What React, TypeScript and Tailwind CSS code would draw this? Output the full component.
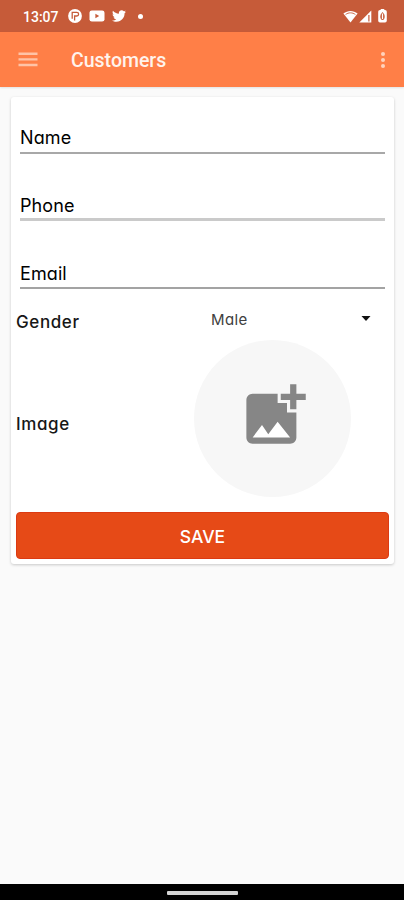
import { FaTwitter } from "react-icons/fa";

//
// ==========================================================
// PAGE
// ==========================================================
export default function App() {
  return (
    <div className="w-full h-[900px] flex flex-col bg-[#fafafa] font-['Roboto',sans-serif] overflow-hidden">
      <StatusBar />
      <AppBar title="Customers" />

      <main className="flex-1 pt-[10px] pl-[11px] pr-[10px]">
        <CustomerForm />
      </main>

      <NavigationBar />
    </div>
  );
}

//
// ==========================================================
// SYSTEM BARS
// ==========================================================
function StatusBar() {
  return (
    <div className="h-8 shrink-0 flex items-center bg-[#c65b39] pl-[23px] pr-[17px] text-white">
      <span className="w-[45px] text-[14px] font-medium leading-none pt-px">
        13:07
      </span>

      {/* P badge */}
      <svg className="w-[14px] h-[14px]" viewBox="0 0 14 14">
        <circle cx="7" cy="7" r="6.9" fill="white" />
        <path
          d="M3.6 3.4h5.2a1.6 1.6 0 0 1 0 3.6H6.6v4.4M4.2 3.4v6.4"
          fill="none"
          stroke="#c65b39"
          strokeWidth="1.3"
        />
      </svg>

      {/* Video */}
      <svg className="ml-[7px] w-4 h-3" viewBox="0 0 16 12">
        <rect x="0.5" y="0.4" width="15" height="11.2" rx="2.4" fill="white" />
        <path d="M6.4 3.8v4.4L10.2 6z" fill="#c65b39" />
      </svg>

      <FaTwitter className="ml-[7px]" size={14} />
      <span className="ml-3 w-[5px] h-[5px] rounded-full bg-white" />

      {/* Wifi, signal, battery */}
      <svg className="ml-auto w-[15px] h-[13px]" viewBox="0 0 15 13">
        <path d="M0.4 3.6C4.6 0 10.4 0 14.6 3.6L7.5 12.4z" fill="white" />
        <path
          d="M2.6 4.5C5.5 2.3 9.5 2.3 12.4 4.5"
          fill="none"
          stroke="#c65b39"
          strokeWidth="0.9"
        />
      </svg>
      <svg className="ml-px w-[13px] h-[13px]" viewBox="0 0 13 13">
        <path d="M12.3 0.5v12H0.3z" fill="white" />
        <path d="M9.9 5v6.5" stroke="#c65b39" strokeWidth="1.2" />
      </svg>
      <svg className="ml-[6px] w-[9px] h-[14px]" viewBox="0 0 9 14">
        <rect x="2.7" y="0" width="3.6" height="2" fill="white" />
        <rect x="0.2" y="1" width="8.6" height="12.6" rx="1.8" fill="white" />
        <path
          d="M4.5 3C2.6 5.2 2.3 6.2 2.3 7.8c0 2 1 3.3 2.2 3.3s2.2-1.3 2.2-3.3C6.7 6.2 6.4 5.2 4.5 3z"
          fill="#c65b39"
        />
        <path d="M4.5 4.5v5.5" stroke="white" strokeWidth="1.2" />
      </svg>
    </div>
  );
}

function AppBar({ title }: { title: string }) {
  return (
    <header className="h-[55px] shrink-0 flex items-center bg-[#ff7f47] pl-[18px] pr-[19px] shadow-[0_1px_2px_rgba(0,0,0,0.1)]">
      <button aria-label="Menu">
        <svg className="w-5 h-[15px]" viewBox="0 0 20 15">
          <path
            d="M0.5 1.7h19M0.5 7.4h19M0.5 13h19"
            stroke="#ffc3a6"
            strokeWidth="2.4"
          />
        </svg>
      </button>
      <h1 className="ml-[33px] text-[19.5px] font-medium leading-none text-[#fff3ec] pt-[2px]">
        {title}
      </h1>
      <button className="ml-auto flex flex-col gap-[2px]" aria-label="More">
        <span className="w-1 h-1 rounded-full bg-[#ffd2bc]" />
        <span className="w-1 h-1 rounded-full bg-[#ffd2bc]" />
        <span className="w-1 h-1 rounded-full bg-[#ffd2bc]" />
      </button>
    </header>
  );
}

function NavigationBar() {
  return (
    <div className="h-4 shrink-0 flex justify-center bg-black pt-[7px]">
      <span className="w-[71px] h-[4px] rounded-[1px] bg-[#d4d4d4]" />
    </div>
  );
}

//
// ==========================================================
// FORM
// ==========================================================
function CustomerForm() {
  return (
    <section className="h-[467px] flex flex-col bg-white rounded-[3px] px-[5px] pb-[5px] shadow-[0_1px_3px_rgba(0,0,0,0.2)] font-['Inter',sans-serif] [font-feature-settings:'cv11'] text-[#161616]">
      <Field label="Name" className="h-[57px]" gap="mb-[3px]" line="h-[2px] bg-[#a8a8a8]" />
      <Field label="Phone" className="h-[67px]" gap="mb-px" line="h-[3px] bg-[#cacaca]" />
      <Field label="Email" className="h-[68px]" gap="mb-[2px]" line="h-[2px] bg-[#a3a3a3]" />

      {/* GENDER */}
      <div className="h-[51px] flex items-center pt-[10px]">
        <span className="w-[195px] text-[17px] font-medium tracking-[0.6px] leading-none pt-[6px]">
          Gender
        </span>
        <span className="text-[15px] tracking-[0.4px] leading-none text-[#404040]">
          Male
        </span>
        <svg className="ml-auto mr-[18px] -mt-[2px] w-[10px] h-[5px]" viewBox="0 0 10 5">
          <path d="M0.5 0h9L5 5z" fill="#111" />
        </svg>
      </div>

      {/* IMAGE */}
      <div className="h-[157px] flex items-center">
        <span className="w-[178px] text-[17px] font-medium tracking-[0.6px] leading-none pt-[12px]">
          Image
        </span>
        <div className="w-[157px] h-[157px] flex items-center justify-center rounded-full bg-[#f7f7f7]">
          <svg
            className="w-[75px] h-[75px] ml-[3px] -mt-[6px]"
            viewBox="0 0 24 24"
            fill="#868686"
          >
            <path d="M4 13h14v7H4z" fill="white" />
            <path d="M19 7v3h-2V7h-3V5h3V2h2v3h3v2h-3zm-3 4V8h-3V5H5c-1.1 0-2 .9-2 2v12c0 1.1.9 2 2 2h12c1.1 0 2-.9 2-2v-8h-3zM5 19l3-4 2 3 3-4 4 5H5z" />
          </svg>
        </div>
      </div>

      <button className="mt-auto h-[47px] pt-[3px] rounded-[4px] bg-[#e64a17] border border-[#dc3a13] text-white text-[17.5px] font-medium">
        SAVE
      </button>
    </section>
  );
}

function Field({
  label,
  className,
  gap,
  line,
}: {
  label: string;
  className: string;
  gap: string;
  line: string;
}) {
  return (
    <div className={`${className} mx-1 flex flex-col justify-end`}>
      <span className={`${gap} text-[18px] tracking-[0.1px] leading-[22px] text-black`}>
        {label}
      </span>
      <span className={`${line} w-full shrink-0`} />
    </div>
  );
}
